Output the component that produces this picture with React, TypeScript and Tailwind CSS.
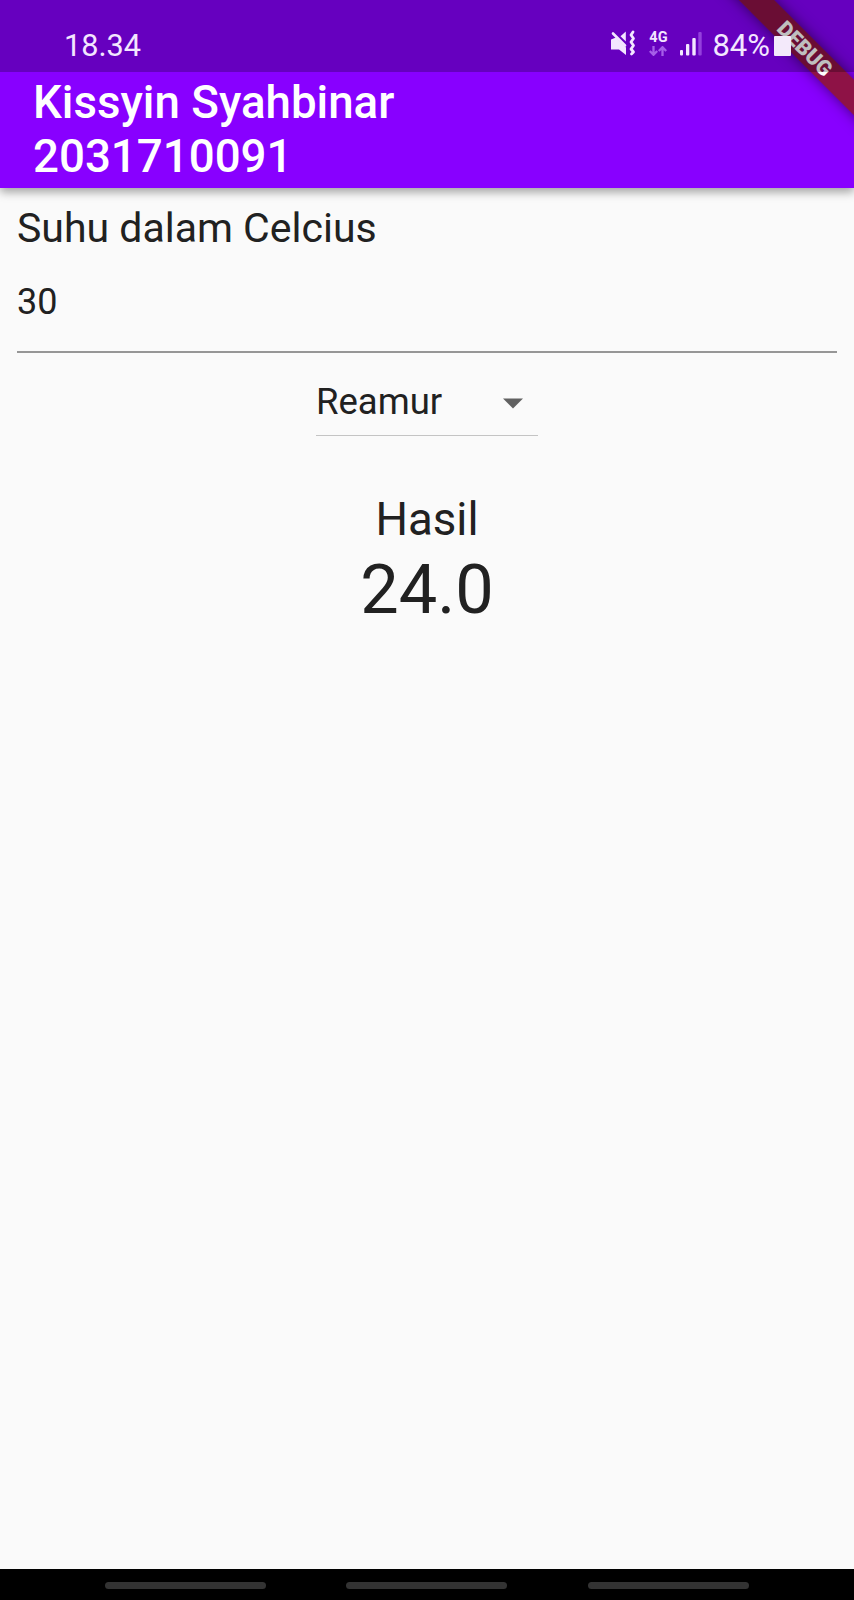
function MutedIcon() {
  return (
    <svg className="h-[28px] w-[26px] shrink-0" viewBox="0 0 26 28">
      <g fill="#f3e6ff">
        <path d="M1 9.500L6 7.500L16 17.500V25L9 19.500H1z" />
        <path d="M15.800 1.500V11.500L10.500 6.200z" />
      </g>
      <g fill="none" stroke="#f3e6ff" strokeLinecap="round">
        <path d="M3 3.500L15 15.500" strokeWidth="2.600" />
        <path
          d="M23 2L21 5L23.500 8.500L21 12L23.500 15.500L21 19L23.500 22L21.500 24"
          strokeWidth="2.800"
          strokeLinejoin="round"
        />
      </g>
    </svg>
  );
}

function NetworkIcon() {
  return (
    <div className="flex w-[20px] flex-col items-center">
      <span className="text-[14.500px] leading-[16px] font-bold text-[#f3e6ff]">4G</span>
      <svg className="h-[10px] w-[18px]" viewBox="0 0 18 10" fill="none" stroke="#a65ee8" strokeWidth="2.300">
        <path d="M4.500 0V8.500M0.800 5L4.500 8.800L8.200 5" />
        <path d="M13.500 10V1.500M9.800 5L13.500 1.200L17.200 5" />
      </svg>
    </div>
  );
}

function SignalIcon() {
  return (
    <svg className="h-[24px] w-[22px]" viewBox="0 0 22 24" fill="#f3e6ff">
      <rect x="0" y="18" width="3" height="5.500" rx="1" />
      <rect x="6" y="12" width="3.300" height="11.500" rx="1" />
      <rect x="12.300" y="6" width="3.400" height="17.500" rx="1" />
      <rect x="18.300" y="0" width="3.400" height="23.500" rx="1" fill="#9440dd" />
    </svg>
  );
}

function StatusBar() {
  return (
    <div className="relative z-20 flex h-[72px] items-start bg-black/25 pt-[27px] pl-[64px] text-[#f3e6ff]">
      <span className="pt-px text-[30.700px] leading-[36px]">18.34</span>
      <div className="ml-auto flex items-start pr-[63px]">
        <div className="pt-[3px]"><MutedIcon /></div>
        <div className="ml-[12px] pt-[3px]"><NetworkIcon /></div>
        <div className="ml-[12px] pt-[5px]"><SignalIcon /></div>
        <span className="ml-[10px] pt-px text-[31px] leading-[36px]">84%</span>
        <div className="mt-[9px] ml-[4px] h-[20px] w-[17px] rounded-[1px] bg-[#f3e9fa]" />
      </div>
    </div>
  );
}

function DebugBanner() {
  return (
    <div className="absolute top-0 right-0 z-10 h-[150px] w-[150px] overflow-hidden">
      <div className="absolute top-[36.300px] left-[-48.800px] h-[25px] w-[300px] rotate-45 bg-black/45 shadow-[0_0_14px_rgba(0,0,0,0.5)]">
        <div className="flex h-full items-center justify-center bg-[#b71c1ca0] text-[21.200px] leading-none font-black text-white">
          DEBUG
        </div>
      </div>
    </div>
  );
}

export default function App() {
  return (
    <div className="flex h-[1600px] w-[854px] flex-col overflow-hidden bg-[#fafafa] font-['Roboto',sans-serif] text-[#212121]">
      <header className="relative z-10 h-[188px] shrink-0 bg-[#8800ff] shadow-[0_4px_9px_rgba(0,0,0,0.36)]">
        <StatusBar />
        <DebugBanner />
        <h1 className="pt-[4px] pl-[33px] text-[45.670px] leading-[53.500px] font-medium text-white">
          Kissyin Syahbinar
          <br />
          2031710091
        </h1>
      </header>

      <main className="flex flex-1 flex-col px-[17px] pt-[16px]">
        <label className="text-[41px] leading-[48px]">Suhu dalam Celcius</label>
        <div className="flex h-[101px] items-start border-b-2 border-[#969696] pt-[29px] text-[36px] leading-[42px]">
          30
        </div>
        <div className="mt-[19px] flex h-[64px] w-[222px] items-start justify-between self-center border-b border-[#c4c4c4] pt-[9px] pr-[15px]">
          <span className="text-[36.500px] leading-[42px]">Reamur</span>
          <svg className="mt-[17px] h-[11px] w-[20px]" viewBox="0 0 20 11" fill="#616161">
            <path d="M0 0.500h20L10 10.500z" />
          </svg>
        </div>
        <div className="mt-[57px] flex flex-col items-center">
          <span className="text-[45.670px] leading-[54px]">Hasil</span>
          <span className="mt-[3px] text-[68.500px] leading-[80px]">24.0</span>
        </div>
      </main>

      <nav className="flex h-[31px] shrink-0 items-start justify-center gap-[80.500px] bg-black pt-[13px] pr-[1px]">
        <span className="h-[7px] w-[161px] rounded-full bg-[#333333]" />
        <span className="h-[7px] w-[161px] rounded-full bg-[#333333]" />
        <span className="h-[7px] w-[161px] rounded-full bg-[#333333]" />
      </nav>
    </div>
  );
}
